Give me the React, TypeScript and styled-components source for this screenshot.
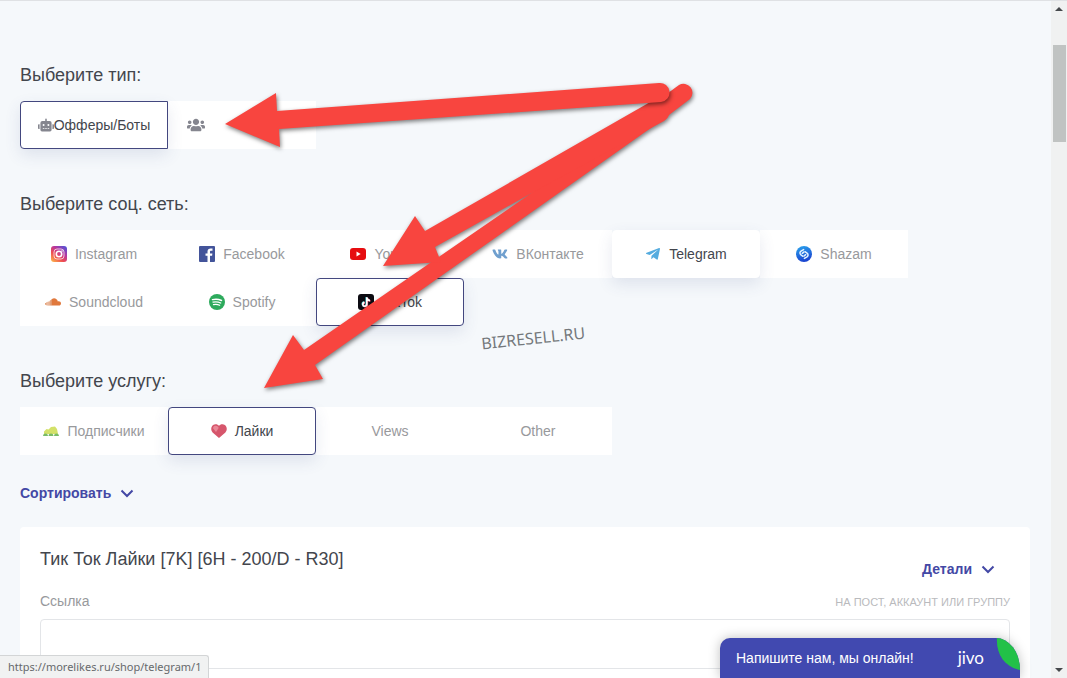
import React from "react";
import styled, { createGlobalStyle, css } from "styled-components";
import { FaRobot, FaUsers, FaVk, FaTelegramPlane } from "react-icons/fa";

const sans = `"Liberation Sans", Arial, sans-serif`;

const GlobalStyle = createGlobalStyle`
  *, *::before, *::after { box-sizing: border-box; }
  body { margin: 0; background: #f5f8fb; font-family: ${sans}; color: #43464d; overflow: hidden; }
  button, input { font-family: inherit; }
`;

const Shell = styled.div`
  position: relative;
  display: flex;
  height: 100vh;
  overflow: hidden;
  border-top: 1px solid #dfe1e4;
`;

const Page = styled.main`
  flex: 1;
  min-width: 0;
  padding: 62px 21px 0 20px;
`;

const Group = styled.section`
  margin-bottom: 43px;
`;

const Heading = styled.h2`
  margin: 0 0 14px;
  font-size: 18px;
  line-height: 24px;
  font-weight: 400;
`;

const Options = styled.div`
  display: flex;
  flex-wrap: wrap;
`;

const Option = styled.button<{ $state?: "active" | "hover"; $tight?: boolean; $square?: boolean; $start?: boolean }>`
  display: flex;
  align-items: center;
  justify-content: ${(p) => (p.$start ? "flex-start" : "center")};
  gap: ${(p) => (p.$tight ? 0 : 8)}px;
  width: 148px;
  height: 48px;
  padding: 0 ${(p) => (p.$start ? 18 : 0)}px;
  border: 1px solid #fff;
  background: #fff;
  color: #98999c;
  font-size: 14px;
  line-height: 20px;
  white-space: nowrap;
  ${(p) => p.$state && css`
    position: relative;
    color: #43464d;
    border-radius: 4px;
    box-shadow: 0 6px 16px rgba(60, 70, 130, 0.12);
  `}
  ${(p) => p.$state === "active" && css`
    border-color: #43477f;
  `}
  ${(p) => p.$square && css`
    border-radius: 4px 0 0 4px;
  `}
  svg { flex: none; }
`;

const LinkButton = styled.button`
  display: flex;
  align-items: center;
  gap: 9px;
  padding: 0;
  border: 0;
  background: none;
  color: #4348a5;
  font-size: 14px;
  line-height: 20px;
  font-weight: 700;
`;

const SortBar = styled.div`
  margin-top: -15px;
  margin-bottom: 24px;
`;

const Card = styled.article`
  padding: 20px;
  background: #fff;
  border-radius: 4px;
`;

const CardHead = styled.header`
  display: flex;
  justify-content: space-between;
  align-items: flex-start;
  margin-bottom: 12px;
`;

const CardTitle = styled.h3`
  margin: 0;
  font-size: 18px;
  line-height: 24px;
  font-weight: 400;
`;

const Details = styled.div`
  padding: 12px 15px 0 0;
`;

const FieldHead = styled.div`
  display: flex;
  justify-content: space-between;
  align-items: baseline;
  height: 20px;
  margin-bottom: 8px;
  line-height: 20px;
`;

const Label = styled.label`
  font-size: 14px;
  color: #98999c;
`;

const Hint = styled.span`
  font-size: 11px;
  color: #b9babd;
`;

const Field = styled.input`
  display: block;
  width: 100%;
  height: 50px;
  padding: 0 16px;
  border: 1px solid #e3e5e8;
  border-radius: 4px;
  background: #fff;
  font-size: 14px;
`;

const Scrollbar = styled.div`
  display: flex;
  flex-direction: column;
  align-items: center;
  justify-content: space-between;
  width: 16px;
  padding: 5px 0;
  background: #f0f1f1;
`;

const Thumb = styled.div`
  width: 13px;
  height: 97px;
  margin: 34px 0 auto;
  background: #c0c3c2;
`;

const Status = styled.div`
  position: absolute;
  left: 0;
  bottom: 0;
  height: 23px;
  padding: 0 6px 0 8px;
  border: 1px solid #d3d5d6;
  border-left: 0;
  border-bottom: 0;
  border-radius: 0 3px 0 0;
  background: #f1f2f2;
  color: #67696c;
  font: 11px/22px "Noto Sans", sans-serif;
`;

const Chat = styled.button`
  position: absolute;
  right: 47px;
  bottom: 0;
  display: flex;
  align-items: center;
  width: 300px;
  height: 40px;
  padding: 0 0 0 16px;
  border: 0;
  border-radius: 10px 24px 0 0 / 10px 32px 0 0;
  background: #4149b0;
  color: #fff;
  font-size: 14px;
  font-weight: 400;
  box-shadow: 0 0 12px rgba(0, 0, 0, 0.25);
  overflow: hidden;
`;

const ChatLogo = styled.span`
  margin-left: auto;
  margin-right: 12px;
  font: 400 17px/20px Lato, sans-serif;
`;

const Leaf = styled.svg`
  display: block;
  align-self: flex-start;
`;

const Watermark = styled.div`
  position: absolute;
  left: 481px;
  top: 326px;
  color: #74787c;
  font: 16px/22px "Noto Sans", sans-serif;
  transform: rotate(-6deg);
`;

const Arrows = styled.svg`
  position: absolute;
  left: 0;
  top: 0;
  pointer-events: none;
  g {
    fill: #f8453f;
    filter: drop-shadow(1px 2px 2px rgba(0, 0, 0, 0.5));
  }
`;

const Chevron = () => (
  <svg width="14" height="14" viewBox="0 0 14 14" fill="none" stroke="#4348a5" strokeWidth="2" aria-hidden="true">
    <path d="M1.5 4.5 7 10l5.500-5.500" />
  </svg>
);

const InstagramIcon = () => (
  <svg width="16" height="16" viewBox="0 0 16 16" aria-hidden="true">
    <defs>
      <linearGradient id="ig" x1="0" y1="1" x2="0.8" y2="0">
        <stop offset="0" stopColor="#fdc04b" />
        <stop offset="0.4" stopColor="#ee4b52" />
        <stop offset="0.7" stopColor="#b536a0" />
        <stop offset="1" stopColor="#5b50d0" />
      </linearGradient>
    </defs>
    <rect width="16" height="16" rx="3" fill="url(#ig)" />
    <rect x="3" y="3" width="10" height="10" rx="3" fill="none" stroke="#fff" strokeOpacity="0.7" />
    <circle cx="8" cy="8" r="2.700" fill="none" stroke="#fff" strokeWidth="1.600" />
    <circle cx="11" cy="5" r="0.800" fill="#fff" />
  </svg>
);

const FacebookIcon = () => (
  <svg width="16" height="16" viewBox="0 0 16 16" aria-hidden="true">
    <rect width="16" height="16" rx="1" fill="#43549a" />
    <path fill="#fff" d="M8.500 16V9.800H6.500V7.400h2V5.600c0-2.100 1.300-3.200 3.100-3.200.9 0 1.600.1 1.900.1v2.200h-1.300c-1 0-1.200.5-1.200 1.200v1.500h2.400l-.3 2.400H11V16z" />
  </svg>
);

const YoutubeIcon = () => (
  <svg width="16" height="16" viewBox="0 0 16 16" aria-hidden="true">
    <rect y="2" width="16" height="12" rx="3" fill="#e60d10" />
    <path fill="#fff" d="m6.500 5.600 4.200 2.400-4.200 2.400z" />
  </svg>
);

const SpotifyIcon = () => (
  <svg width="16" height="16" viewBox="0 0 16 16" fill="none" stroke="#fff" strokeLinecap="round" aria-hidden="true">
    <circle cx="8" cy="8" r="8" fill="#2daa5c" stroke="none" />
    <path strokeWidth="1.500" d="M3.500 5.600c3-.8 6.300-.5 9 .9" />
    <path strokeWidth="1.300" d="M4 8.200c2.600-.7 5.300-.4 7.700.8" />
    <path strokeWidth="1.100" d="M4.400 10.600c2.200-.5 4.400-.3 6.300.7" />
  </svg>
);

const ShazamIcon = () => (
  <svg width="16" height="16" viewBox="0 0 16 16" fill="none" stroke="#e4f2ff" strokeWidth="1.500" strokeLinecap="round" aria-hidden="true">
    <defs>
      <linearGradient id="shz" x1="0" y1="0" x2="0.3" y2="1">
        <stop offset="0" stopColor="#2aa6ee" />
        <stop offset="1" stopColor="#1a45d0" />
      </linearGradient>
    </defs>
    <circle cx="8" cy="8" r="8" fill="url(#shz)" stroke="none" />
    <path d="M7 10.300 5 8.900c-1.600-1.200-1.200-2.900 0-3.700L7.600 3.600" />
    <path d="m9 5.700 2 1.400c1.600 1.200 1.200 2.900 0 3.700l-2.600 1.600" />
    <path d="m6.300 7.300 1.500-1.200M9.700 8.700 8.200 9.900" />
  </svg>
);

const SoundcloudIcon = () => (
  <svg width="16" height="16" viewBox="0 0 16 16" aria-hidden="true">
    <path fill="#e0783c" d="M7 4.900c2.600-1.400 5.300.1 5.800 2.600 1.700-.5 3.200.5 3.200 2 0 1.300-.9 2.100-2.200 2.100H7z" />
    <path stroke="#dc8a59" strokeWidth="0.900" d="M.6 9v1.800M1.800 8.300v3M3 7.800v3.800M4.200 7.300v4.300M5.400 6.200v5.400M6.500 5.400v6.200" />
  </svg>
);

const TiktokIcon = () => (
  <svg width="16" height="16" viewBox="0 0 16 16" fill="none" strokeWidth="1.700" aria-hidden="true">
    <rect width="16" height="16" rx="3" fill="#0c0b12" />
    <path stroke="#38c9ce" d="M8.300 3v7a2 2 0 1 1-2.300-2M8.300 3.300c.3 1.800 1.400 2.800 3.200 3" />
    <path stroke="#e34060" d="M9.300 3.700v7a2 2 0 1 1-2.300-2M9.300 4c.3 1.800 1.400 2.800 3.200 3" />
    <path stroke="#fff" d="M8.800 3.300v7a2 2 0 1 1-2.300-2M8.800 3.600c.3 1.800 1.400 2.800 3.200 3" />
  </svg>
);

const FollowersIcon = () => (
  <svg width="16" height="16" viewBox="0 0 16 16" aria-hidden="true">
    <path fill="#d3e169" d="M1 11V8.500L3.500 6l2 .5L8 4l4-.5 2 2.500 1 5z" />
    <path fill="#79bb67" d="M0 13c.3-2 1.300-2.600 2.500-2.600S4.800 11 5 13zM5.500 13c.2-2 1.200-2.600 2.500-2.600s2.300.6 2.500 2.600zM11 13c.2-2 1.200-2.600 2.500-2.600S15.700 11 16 13z" />
  </svg>
);

const HeartIcon = () => (
  <svg width="16" height="16" viewBox="0 0 16 16" aria-hidden="true">
    <path fill="#d6566c" d="M8 15 1.600 9.500C-1 6.500.2 1.500 4.300 1.300 6 1.200 7.200 1.800 8 2.800 8.800 1.800 10 1.200 11.700 1.300c4.100.2 5.300 5.200 2.700 8.200z" />
    <path fill="#e98797" d="M2 5.300c0-1.600 1.200-2.600 2.600-2.500 1.300.1 2.600.8 3.100 2.100L5 8.900z" />
  </svg>
);

const networks: { name: string; icon: React.ReactNode; state?: "active" | "hover" }[] = [
  { name: "Instagram", icon: <InstagramIcon /> },
  { name: "Facebook", icon: <FacebookIcon /> },
  { name: "YouTube", icon: <YoutubeIcon /> },
  { name: "ВКонтакте", icon: <FaVk size={16} color="#6f9fce" /> },
  { name: "Telegram", icon: <FaTelegramPlane size={16} color="#55acdf" />, state: "hover" },
  { name: "Shazam", icon: <ShazamIcon /> },
  { name: "Soundcloud", icon: <SoundcloudIcon /> },
  { name: "Spotify", icon: <SpotifyIcon /> },
  { name: "TikTok", icon: <TiktokIcon />, state: "active" },
];

export default function App() {
  return (
    <>
      <GlobalStyle />
      <Shell>
        <Page>
          <Group>
            <Heading>Выберите тип:</Heading>
            <Options>
              <Option $state="active" $tight $square>
                <FaRobot size={16} color="#85868f" />
                Офферы/Боты
              </Option>
              <Option $start aria-label="Пользователи">
                <FaUsers size={18} color="#85868f" />
              </Option>
            </Options>
          </Group>
          <Group>
            <Heading>Выберите соц. сеть:</Heading>
            <Options>
              {networks.map((n) => (
                <Option key={n.name} $state={n.state}>
                  {n.icon}
                  {n.name}
                </Option>
              ))}
            </Options>
          </Group>
          <Group>
            <Heading>Выберите услугу:</Heading>
            <Options>
              <Option><FollowersIcon />Подписчики</Option>
              <Option $state="active"><HeartIcon />Лайки</Option>
              <Option>Views</Option>
              <Option>Other</Option>
            </Options>
          </Group>
          <SortBar>
            <LinkButton>Сортировать<Chevron /></LinkButton>
          </SortBar>
          <Card>
            <CardHead>
              <CardTitle>Тик Ток Лайки [7K] [6H - 200/D - R30]</CardTitle>
              <Details>
                <LinkButton>Детали<Chevron /></LinkButton>
              </Details>
            </CardHead>
            <FieldHead>
              <Label htmlFor="link">Ссылка</Label>
              <Hint>НА ПОСТ, АККАУНТ ИЛИ ГРУППУ</Hint>
            </FieldHead>
            <Field id="link" />
          </Card>
        </Page>
        <Scrollbar aria-hidden="true">
          <svg width="8" height="5" viewBox="0 0 8 5"><path fill="#45484b" d="M0 5 4 1l4 4z" /></svg>
          <Thumb />
          <svg width="8" height="5" viewBox="0 0 8 5"><path fill="#45484b" d="m0 0 4 4 4-4z" /></svg>
        </Scrollbar>
        <Watermark>BIZRESELL.RU</Watermark>
        <Arrows width="720" height="420" viewBox="0 1 720 420" aria-hidden="true">
          <g>
            <path d="M264 388 293 335 304 350 530 194 679 85A9 9 0 0 1 690 99L665 118 315 365 323 379z" />
            <path d="M383 266 415 216 425 231 652 101A10 10 0 0 1 664 121L530 194 435 247 441 262z" />
          </g>
          <g>
            <path d="M225 124 276 93 277 111 659 83A9 9 0 0 1 661 102L279 129 280 147z" />
          </g>
        </Arrows>
        <Status>https://morelikes.ru/shop/telegram/1</Status>
        <Chat>
          Напишите нам, мы онлайн!
          <ChatLogo>jivo</ChatLogo>
          <Leaf width="24" height="34" viewBox="0 0 24 34" aria-hidden="true">
            <path fill="#22c148" d="M1 0h23v32C9 29 0 17 1 0z" />
          </Leaf>
        </Chat>
      </Shell>
    </>
  );
}
